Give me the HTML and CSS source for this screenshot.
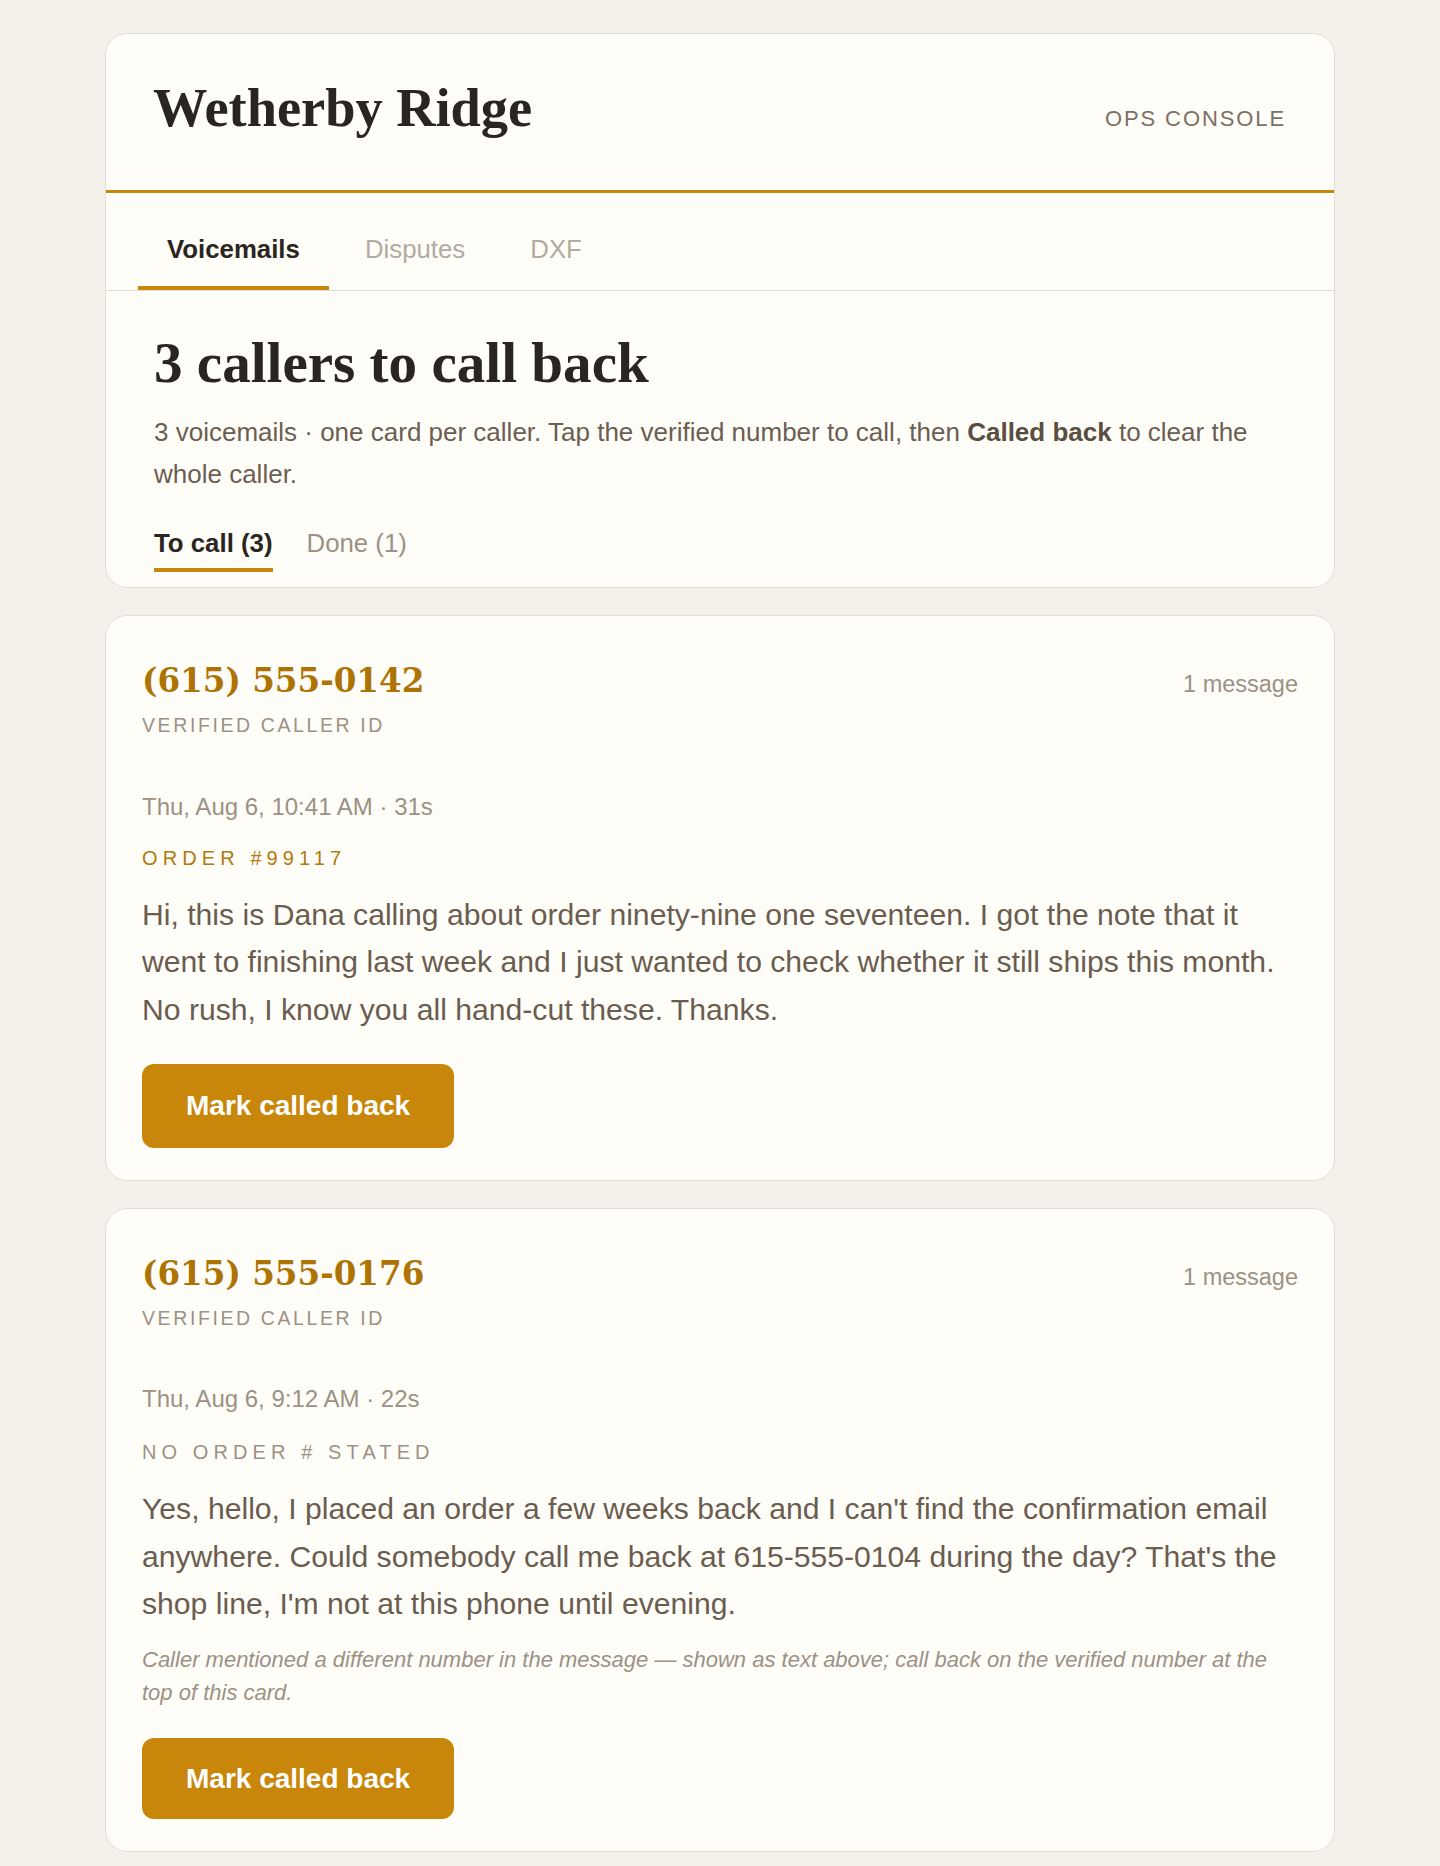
FILE: index.html
```html
<!DOCTYPE html>
<html lang="en">
<head>
<meta charset="utf-8">
<title>Wetherby Ridge — Ops Console</title>
<link rel="stylesheet" href="styles.css">
</head>
<body>
<div class="page">
  <div class="card head-card">
    <header class="masthead">
      <h1 class="brand">Wetherby Ridge</h1>
      <span class="console">OPS CONSOLE</span>
    </header>
    <nav class="tabs">
      <a class="tab active" href="#">Voicemails</a>
      <a class="tab" href="#">Disputes</a>
      <a class="tab" href="#">DXF</a>
    </nav>
    <section class="intro">
      <h2 class="intro-title">3 callers to call back</h2>
      <p class="intro-text"><span>3 voicemails · one card per caller. Tap the verified number to call, then</span> <strong>Called back</strong> <span>to clear the</span> <span>whole caller.</span></p>
      <div class="subtabs">
        <a class="subtab active" href="#">To call (3)</a>
        <a class="subtab" href="#">Done (1)</a>
      </div>
    </section>
  </div>

  <article class="card caller">
    <div class="caller-head">
      <a class="phone" href="#">(615) 555-0142</a>
      <span class="count">1 message</span>
    </div>
    <div class="verified">VERIFIED CALLER ID</div>
    <div class="meta">Thu, Aug 6, 10:41 AM · 31s</div>
    <div class="order">ORDER #99117</div>
    <p class="message">Hi, this is Dana calling about order ninety-nine one seventeen. I got the note that it went to finishing last week and I just wanted to check whether it still ships this month. No rush, I know you all hand-cut these. Thanks.</p>
    <button class="btn" type="button">Mark called back</button>
  </article>

  <article class="card caller">
    <div class="caller-head">
      <a class="phone" href="#">(615) 555-0176</a>
      <span class="count">1 message</span>
    </div>
    <div class="verified">VERIFIED CALLER ID</div>
    <div class="meta">Thu, Aug 6, 9:12 AM · 22s</div>
    <div class="order none">NO ORDER # STATED</div>
    <p class="message">Yes, hello, I placed an order a few weeks back and I can't find the confirmation email anywhere. Could somebody call me back at 615-555-0104 during the day? That's the shop line, I'm not at this phone until evening.</p>
    <p class="note">Caller mentioned a different number in the message — shown as text above; call back on the verified number at the top of this card.</p>
    <button class="btn" type="button">Mark called back</button>
  </article>
</div>
</body>
</html>
```
FILE: styles.css
```css
* { box-sizing: border-box; }
html, body { margin: 0; padding: 0; }
body {
  background: #f4f1ea;
  font-family: "Liberation Sans", Arial, sans-serif;
  color: #6a5d50;
}
.page {
  max-width: 1230px;
  margin: 0 auto;
  padding: 33px 0 10px;
  display: flex;
  flex-direction: column;
  gap: 27px;
}
.card {
  background: #fffdf8;
  border: 1px solid #e4ded2;
  border-radius: 22px;
}
.head-card { overflow: hidden; }

/* masthead */
.masthead {
  display: flex;
  justify-content: space-between;
  align-items: baseline;
  padding: 42px 48px 48.7px 47px;
  border-bottom: 3px solid #c8860b;
}
.brand {
  margin: 0;
  font-family: "Liberation Serif", "DejaVu Serif", serif;
  font-weight: 700;
  font-size: 54.4px;
  line-height: 1.2;
  color: #2b2521;
}
.console {
  font-size: 22px;
  letter-spacing: 1.9px;
  color: #7b7065;
}

/* main tabs */
.tabs {
  display: flex;
  gap: 7px;
  padding: 0 32px;
  border-bottom: 1px solid #e2dccf;
}
.tab {
  font-size: 25.8px;
  line-height: 30px;
  padding: 41px 29px 22px;
  border-bottom: 4px solid transparent;
  color: #b3aba0;
  text-decoration: none;
}
.tab.active {
  color: #2b2521;
  font-weight: 700;
  border-bottom-color: #c8860b;
}

/* intro */
.intro { padding: 38.5px 48px 15px; }
.intro-title {
  margin: 0;
  font-family: "Liberation Serif", "DejaVu Serif", serif;
  font-weight: 700;
  font-size: 57.1px;
  line-height: 1.2;
  color: #2b2521;
}
.intro-text {
  margin: 14.2px 0 0;
  font-size: 26px;
  line-height: 41.6px;
  color: #6b5e52;
}
.intro-text strong { color: #5a4d41; }
.subtabs {
  display: flex;
  gap: 34px;
  margin-top: 32.6px;
}
.subtab {
  font-size: 25.8px;
  line-height: 30px;
  padding-bottom: 10px;
  border-bottom: 4px solid transparent;
  color: #9c9184;
  text-decoration: none;
}
.subtab.active {
  color: #2b2521;
  font-weight: 700;
  border-bottom-color: #c8860b;
}

/* caller cards */
.caller { padding: 45.2px 36px 32px; }
.caller-head {
  display: flex;
  justify-content: space-between;
  align-items: baseline;
}
.phone {
  font-family: "DejaVu Serif", "Liberation Serif", serif;
  font-weight: 700;
  font-size: 32.6px;
  line-height: 1.2;
  color: #ad7305;
  text-decoration: none;
}
.count {
  font-size: 23.5px;
  line-height: 1.2;
  color: #9c9184;
}
.verified {
  margin-top: 11.6px;
  font-size: 19.5px;
  line-height: 26.6px;
  letter-spacing: 2.6px;
  color: #9c9184;
}
.meta {
  margin-top: 52.1px;
  font-size: 24px;
  line-height: 32.2px;
  color: #9c9184;
}
.order {
  margin-top: 22px;
  font-size: 20px;
  line-height: 26.6px;
  letter-spacing: 5.1px;
  color: #b07a0e;
}
.order.none { color: #9c9184; margin-top: 23.5px; }
.message {
  margin: 19.35px 0 0;
  font-size: 30.15px;
  line-height: 47.6px;
  color: #6a5d50;
}
.note {
  margin: 14.9px 0 0;
  font-size: 22px;
  line-height: 33.3px;
  font-style: italic;
  color: #9c9184;
}
.btn {
  display: block;
  margin-top: 30.45px;
  padding: 26px 44px;
  border: 0;
  border-radius: 12px;
  background: #c8870b;
  color: #fff;
  font-family: "Liberation Sans", Arial, sans-serif;
  font-weight: 700;
  font-size: 28px;
  line-height: 32px;
  cursor: pointer;
}
.note + .btn { margin-top: 29px; padding: 24.5px 44px; }
```
